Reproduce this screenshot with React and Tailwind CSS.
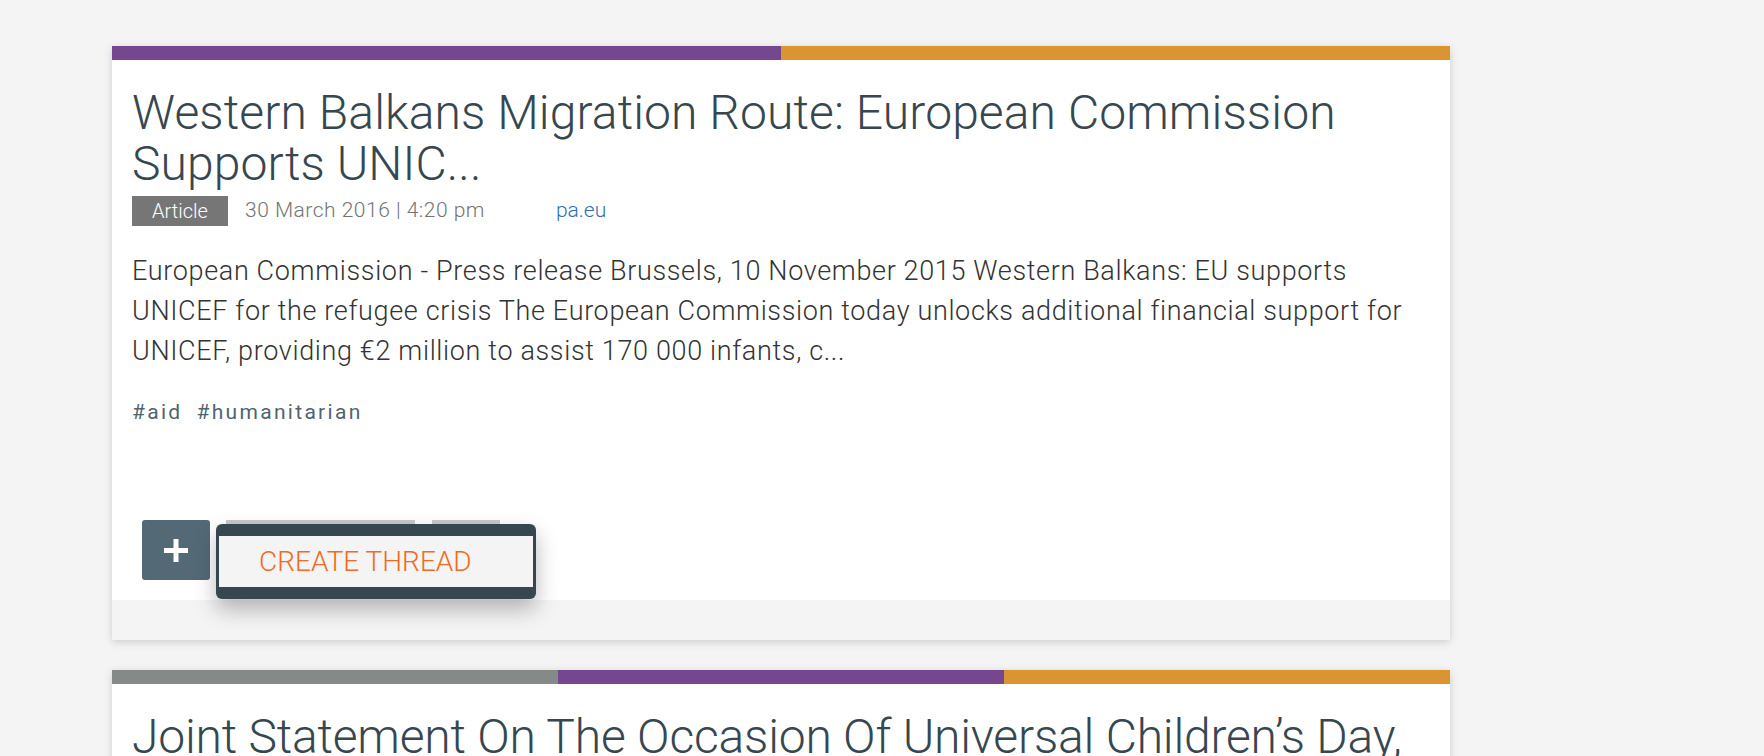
import React from "react";

const font = { fontFamily: "Roboto, 'Noto Sans', sans-serif" };

function PlusIcon() {
  return (
    <svg width="24" height="23" viewBox="0 0 24 23" aria-hidden="true">
      <rect x="9.5" y="0" width="5" height="23" fill="#ffffff" />
      <rect x="0" y="9" width="24" height="5" fill="#ffffff" />
    </svg>
  );
}

function FirstCard() {
  return (
    <div className="relative w-[1338px] bg-white shadow-[0_2px_8px_rgba(0,0,0,0.16)]">
      <div className="flex h-[14px]">
        <div className="flex-1 bg-[#75478f]" />
        <div className="flex-1 bg-[#da9431]" />
      </div>
      <div className="px-5 pt-[27px] pb-5">
        <h2 className="text-[48px] leading-[51px] font-light text-[#37474f] tracking-[0.1px]">
          Western Balkans Migration Route: European Commission Supports UNIC...
        </h2>
        <div className="mt-[7px] flex h-[30px] items-center">
          <span className="flex h-[30px] w-[96px] items-center justify-center bg-[#767676] text-[20px] font-light text-white">
            Article
          </span>
          <span className="ml-[17px] text-[21px] font-light tracking-[0.5px] text-[#747474]">
            30 March 2016 | 4:20 pm
          </span>
          <span className="ml-[71px] text-[21px] font-light text-[#2e6db4]">pa.eu</span>
        </div>
        <p className="mt-[25px] text-[27px] leading-[40px] font-light tracking-[0.65px] text-[#333333]">
          European Commission - Press release Brussels, 10 November 2015 Western Balkans: EU supports
          UNICEF for the refugee crisis The European Commission today unlocks additional financial support for
          UNICEF, providing €2 million to assist 170 000 infants, c...
        </p>
        <div className="mt-[26px] flex gap-[14px] text-[21px] leading-[30px] tracking-[2.3px] text-[#50646f]">
          <span>#aid</span>
          <span>#humanitarian</span>
        </div>
        <div className="mt-[93px] ml-[10px] flex items-start gap-[16px]">
          <button className="flex h-[60px] w-[68px] items-center justify-center rounded-[3px] bg-[#536a76]">
            <PlusIcon />
          </button>
          <div className="h-[60px] w-[189px] bg-[#c9c9c9]" />
          <div className="ml-[1px] h-[60px] w-[68px] bg-[#c9c9c9]" />
        </div>
      </div>
      <div className="h-[40px] bg-[#f4f4f4]" />
      <div className="absolute left-[104px] top-[478px] flex h-[75px] w-[320px] flex-col rounded-[6px] bg-[#37474f] px-[3px] py-[12px] shadow-[0_10px_22px_rgba(0,0,0,0.28)]">
        <div className="flex flex-1 items-center bg-[#f4f4f4] pl-[40px]">
          <span className="text-[28px] font-light leading-none text-[#f26a21]">CREATE THREAD</span>
        </div>
      </div>
    </div>
  );
}

function SecondCard() {
  return (
    <div className="w-[1338px] bg-white shadow-[0_2px_8px_rgba(0,0,0,0.16)]">
      <div className="flex h-[14px]">
        <div className="flex-1 bg-[#858988]" />
        <div className="flex-1 bg-[#75478f]" />
        <div className="flex-1 bg-[#da9431]" />
      </div>
      <div className="px-5 pt-[27px] pb-5">
        <h2 className="text-[48px] leading-[51px] font-light text-[#37474f] tracking-[-0.2px]">
          Joint Statement On The Occasion Of Universal Children’s Day, 20 November 2015
        </h2>
        <div className="h-[200px]" />
      </div>
    </div>
  );
}

export default function App() {
  return (
    <div className="h-[756px] w-full overflow-hidden bg-[#f4f4f4]" style={font}>
      <div className="flex flex-col gap-[30px] pl-[112px] pt-[46px]">
        <FirstCard />
        <SecondCard />
      </div>
    </div>
  );
}
